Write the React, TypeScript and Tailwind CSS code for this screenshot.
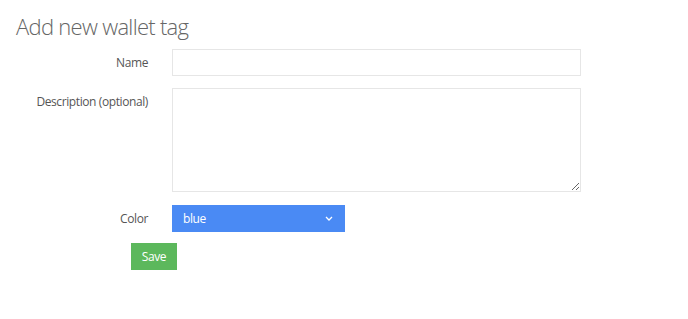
const rows = "grid grid-cols-[148px_409px] gap-x-6";

export default function App() {
  return (
    <div className="w-[688px] h-[319px] bg-white font-['Open_Sans',sans-serif] text-[#555] text-[12px] tracking-[-0.4px]">
      <h1 className="pl-4 pt-[10px] text-[22px] font-light leading-[32px] tracking-[-0.7px] text-[#666]">Add new wallet tag</h1>
      <form className="mt-[7px] flex flex-col">
        <div className={rows}>
          <label className="text-right leading-[27px]">Name</label>
          <input className="h-[27px] border border-[#e6e6e6] bg-white px-2 outline-none" />
        </div>
        <div className={`${rows} mt-3`}>
          <label className="text-right leading-[27px]">Description (optional)</label>
          <textarea className="h-[104px] border border-[#e6e6e6] bg-white px-2 outline-none" />
        </div>
        <div className={`${rows} mt-[13px]`}>
          <label className="text-right leading-[27px]">Color</label>
          <div className="flex h-[27px] w-[173px] items-center justify-between bg-[#4a8af4] pl-[11px] pr-[12px] text-white">
            <span>blue</span>
            <svg width="8" height="5" viewBox="0 0 8 5" fill="none" stroke="white" strokeWidth="1.3">
              <path d="M1 1l3 3 3-3" />
            </svg>
          </div>
        </div>
        <div className="mt-[11px] pl-[131px]">
          <button type="button" className="h-[27px] w-[46px] bg-[#5cb85c] text-white">Save</button>
        </div>
      </form>
    </div>
  );
}
